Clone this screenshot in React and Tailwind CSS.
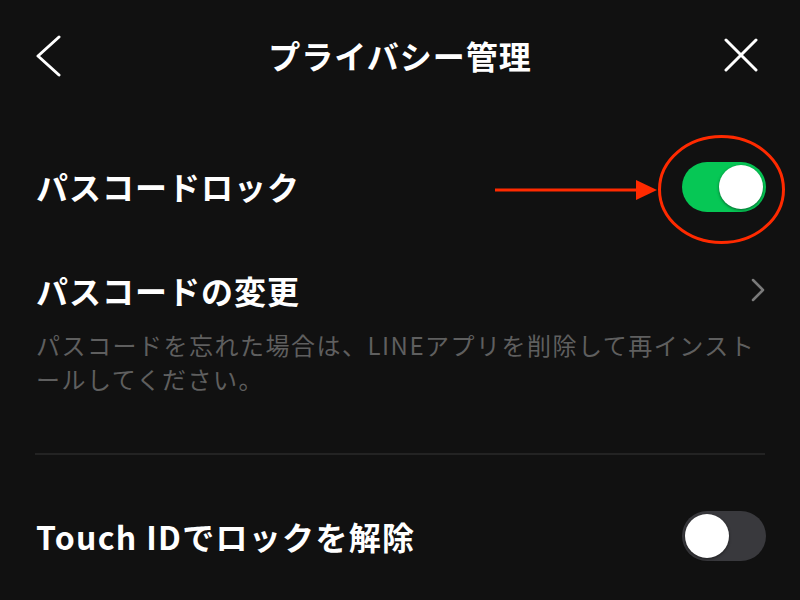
import React from "react";

function Toggle({ on }) {
  return (
    <div
      className={
        "w-[84px] h-[50px] rounded-full p-[3px] flex items-center " +
        (on ? "bg-[#06c755] justify-end" : "bg-[#39393d] justify-start")
      }
    >
      <div className="w-[44px] h-[44px] rounded-full bg-white shadow-[0_1px_3px_rgba(0,0,0,0.5)]" />
    </div>
  );
}

export default function App() {
  return (
    <div
      className="relative w-[800px] h-[600px] overflow-hidden bg-[#111111] text-white"
      style={{ fontFamily: '"Noto Sans CJK JP", "Noto Sans", sans-serif' }}
    >
      {/* Header */}
      <div className="grid grid-cols-[1fr_auto_1fr] items-center h-[110px] px-[36px]">
        <div className="flex justify-start">
          <svg width="26" height="42" viewBox="0 0 26 42" className="mt-[2px]">
            <polyline
              points="23,2 2,21 23,40"
              fill="none"
              stroke="white"
              strokeWidth="3"
              strokeLinecap="round"
              strokeLinejoin="round"
            />
          </svg>
        </div>
        <div className="text-[32px] font-bold tracking-[1px] leading-none">プライバシー管理</div>
        <div className="flex justify-end pr-[6px]">
          <svg width="34" height="34" viewBox="0 0 34 34">
            <path
              d="M2 2 L32 32 M32 2 L2 32"
              fill="none"
              stroke="white"
              strokeWidth="3"
              strokeLinecap="round"
            />
          </svg>
        </div>
      </div>

      {/* Passcode lock row */}
      <div className="mt-[36px] h-[80px] flex items-center justify-between pl-[36px] pr-[34px]">
        <div className="text-[32px] font-bold tracking-[1px] leading-none">パスコードロック</div>
        <div className="mt-[2px]">
          <Toggle on />
        </div>
      </div>

      {/* Change passcode row */}
      <div className="mt-[40px] h-[48px] flex items-center justify-between pl-[36px] pr-[34px]">
        <div className="text-[32px] font-bold tracking-[1px] leading-none">パスコードの変更</div>
        <svg width="16" height="26" viewBox="0 0 16 26">
          <polyline
            points="3,3 13,13 3,23"
            fill="none"
            stroke="#7a7a7a"
            strokeWidth="2.5"
            strokeLinecap="round"
            strokeLinejoin="round"
          />
        </svg>
      </div>

      {/* Description */}
      <p className="mt-[14px] pl-[36px] pr-[30px] text-[24px] leading-[34px] tracking-[1.5px] text-[#5f5f5f] whitespace-nowrap">
        パスコードを忘れた場合は、LINEアプリを削除して再インスト
        <br />
        ールしてください。
      </p>

      {/* Divider */}
      <div className="mt-[57px] mx-[35px] h-[2px] bg-[#232323]" />

      {/* Touch ID row */}
      <div className="mt-[41px] h-[80px] flex items-center justify-between pl-[36px] pr-[34px]">
        <div className="text-[32px] font-bold tracking-[1.3px] leading-none">Touch IDでロックを解除</div>
        <Toggle on={false} />
      </div>

      {/* Annotation overlay */}
      <svg
        className="absolute left-0 top-0 pointer-events-none"
        width="800"
        height="600"
        viewBox="0 0 800 600"
      >
        <line x1="495" y1="190" x2="640" y2="190" stroke="#ff2a00" strokeWidth="3" />
        <polygon points="636,180 657,190 636,200" fill="#ff2a00" />
        <ellipse
          cx="721.5"
          cy="189.5"
          rx="62"
          ry="53"
          fill="none"
          stroke="#ff2a00"
          strokeWidth="3"
        />
      </svg>
    </div>
  );
}
